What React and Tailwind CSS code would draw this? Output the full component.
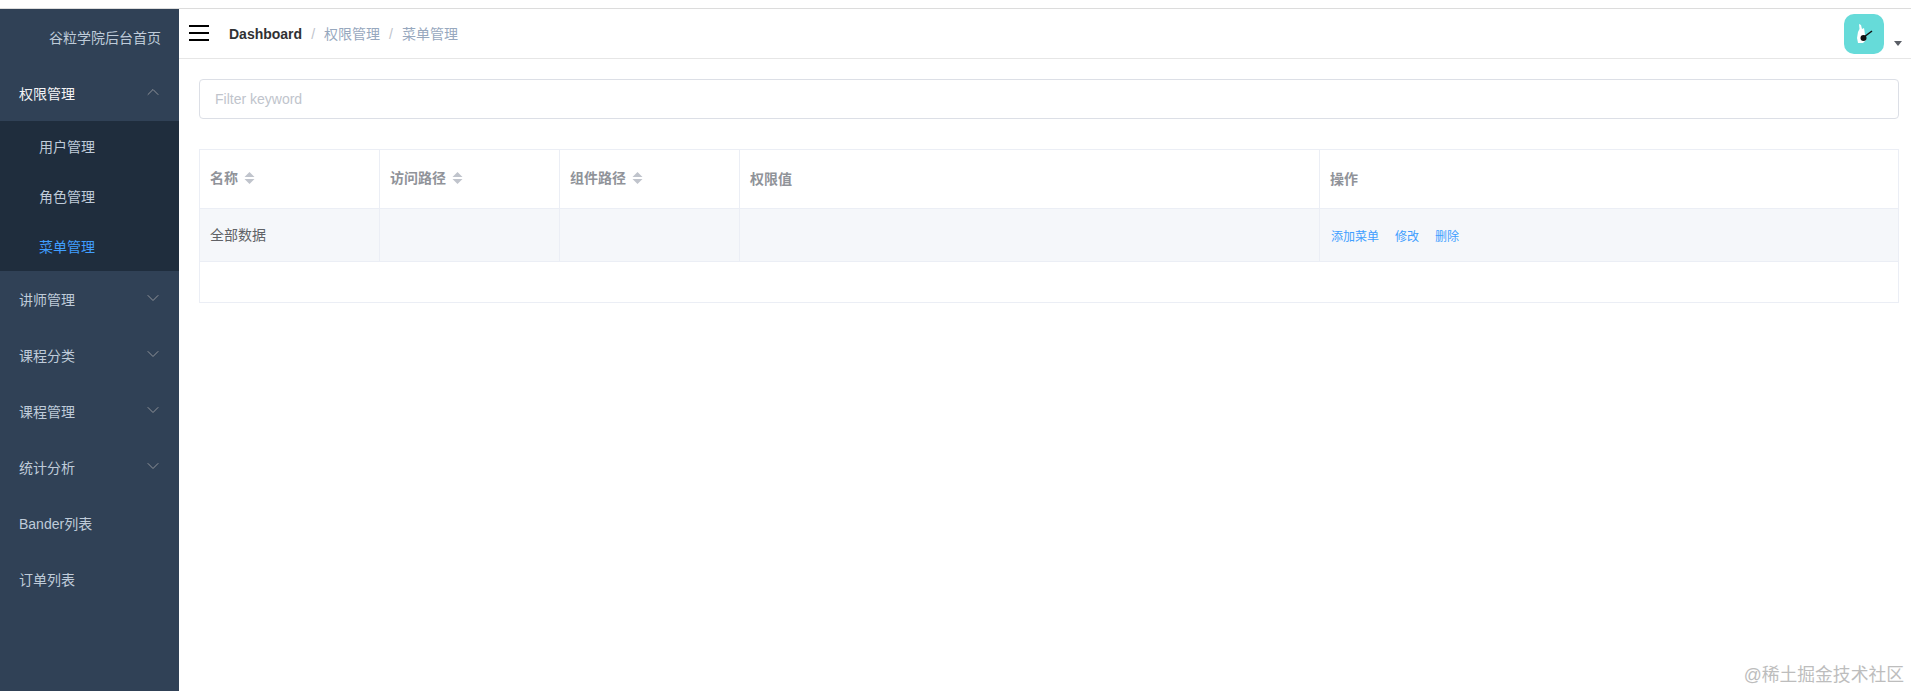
import { ChevronDown, ChevronUp } from 'lucide-react';

const font = { fontFamily: '"Liberation Sans", "Noto Sans CJK SC", sans-serif' };

const menuItems = [
  { label: '讲师管理', arrow: true },
  { label: '课程分类', arrow: true },
  { label: '课程管理', arrow: true },
  { label: '统计分析', arrow: true },
  { label: 'Bander列表' },
  { label: '订单列表' },
];

function SortCaret() {
  return (
    <svg width="11" height="12" viewBox="0 0 11 12" className="ml-[6px] inline-block align-[-1px]">
      <path d="M5.5 0 L10.5 5 L0.5 5 Z" fill="#c0c4cc" />
      <path d="M5.5 12 L10.5 7 L0.5 7 Z" fill="#c0c4cc" />
    </svg>
  );
}

function Sidebar() {
  return (
    <aside className="w-[179px] shrink-0 bg-[#304156] text-[14px] text-[#bfcbd9]">
      <div className="flex h-[56px] items-center justify-end pr-[18px] pt-[2px]">谷粒学院后台首页</div>
      <div className="flex h-[56px] items-center justify-between pl-[19px] pr-[16px] pt-[2px] text-[#f4f4f5]">
        <span>权限管理</span>
        <ChevronUp size={20} strokeWidth={1.2} className="mb-[5px] text-[#909399]" />
      </div>
      <div className="bg-[#1f2d3d]">
        <div className="flex h-[50px] items-center pl-[39px] pt-[3px]">用户管理</div>
        <div className="flex h-[50px] items-center pl-[39px] pt-[3px]">角色管理</div>
        <div className="flex h-[50px] items-center pl-[39px] pt-[3px] text-[#409eff]">菜单管理</div>
      </div>
      {menuItems.map((item) => (
        <div key={item.label} className="flex h-[56px] items-center justify-between pl-[19px] pr-[16px] pt-[3px]">
          <span>{item.label}</span>
          {item.arrow && <ChevronDown size={20} strokeWidth={1.2} className="mb-[5px] text-[#909399]" />}
        </div>
      ))}
    </aside>
  );
}

function Navbar() {
  return (
    <header className="flex h-[50px] items-center border-b border-[#e6e6e6] bg-white text-[14px]">
      <svg width="20" height="16" viewBox="0 0 20 16" className="ml-[10px] mb-[1px]">
        <rect x="0" y="0" width="20" height="2" fill="#000" />
        <rect x="0" y="7" width="20" height="2" fill="#000" />
        <rect x="0" y="14" width="20" height="2" fill="#000" />
      </svg>
      <nav className="ml-[20px] flex items-center pt-[1px] text-[#97a8be]">
        <span className="font-bold text-[#303133]">Dashboard</span>
        <span className="mx-[9px] text-[#c0c4cc]">/</span>
        <span>权限管理</span>
        <span className="mx-[9px] text-[#c0c4cc]">/</span>
        <span>菜单管理</span>
      </nav>
      <div className="ml-auto flex items-center pr-[9px]">
        <div className="flex h-[40px] w-[40px] items-center justify-center rounded-[10px] bg-[#66dbd9]">
          <svg width="24" height="24" viewBox="0 0 24 24">
            <path d="M7 2 L9 3 L10 7 L12 6 L12.5 9 L13 13 L14 18 L11 21 L6 21 L5 16 L6 10 L7.5 7 Z" fill="#fff" />
            <circle cx="11.5" cy="16" r="3" fill="#111" />
            <path d="M12 15 L20 9" stroke="#111" strokeWidth="1.5" />
          </svg>
        </div>
        <svg width="8" height="5" viewBox="0 0 8 5" className="ml-[10px] mt-[20px]">
          <path d="M0 0 L8 0 L4 5 Z" fill="#5a5e66" />
        </svg>
      </div>
    </header>
  );
}

function PermissionTable() {
  return (
    <table className="mt-[30px] w-full table-fixed border-collapse border border-[#ebeef5] text-[14px] text-[#606266]">
      <colgroup>
        <col className="w-[180px]" />
        <col className="w-[180px]" />
        <col className="w-[180px]" />
        <col className="w-[580px]" />
        <col />
      </colgroup>
      <thead>
        <tr className="h-[59px] font-bold text-[#909399]">
          <th className="border border-[#ebeef5] px-[10px] pb-[2px] text-left font-bold">名称<SortCaret /></th>
          <th className="border border-[#ebeef5] px-[10px] pb-[2px] text-left font-bold">访问路径<SortCaret /></th>
          <th className="border border-[#ebeef5] px-[10px] pb-[2px] text-left font-bold">组件路径<SortCaret /></th>
          <th className="border border-[#ebeef5] px-[10px] text-left font-bold">权限值</th>
          <th className="border border-[#ebeef5] px-[10px] text-left font-bold">操作</th>
        </tr>
      </thead>
      <tbody>
        <tr className="h-[53px] bg-[#f5f7fa]">
          <td className="border border-[#ebeef5] px-[10px]">全部数据</td>
          <td className="border border-[#ebeef5]" />
          <td className="border border-[#ebeef5]" />
          <td className="border border-[#ebeef5]" />
          <td className="border border-[#ebeef5] pl-[11px] pt-[3px] text-[12px] text-[#409eff]">
            <span className="flex gap-[16px]">
              <span>添加菜单</span>
              <span>修改</span>
              <span>删除</span>
            </span>
          </td>
        </tr>
        <tr className="h-[41px]">
          <td colSpan={5} />
        </tr>
      </tbody>
    </table>
  );
}

export default function App() {
  return (
    <div className="relative flex min-h-screen flex-col bg-white" style={font}>
      <div className="h-[9px] shrink-0 border-b border-[#dcdcdc] bg-white" />
      <div className="flex flex-1">
        <Sidebar />
        <main className="min-w-0 flex-1">
          <Navbar />
          <div className="pl-[20px] pr-[12px] pt-[20px]">
            <input
              placeholder="Filter keyword"
              className="h-[40px] w-full rounded-[4px] border border-[#dcdfe6] px-[15px] text-[14px] outline-none placeholder:text-[#c0c4cc]"
            />
            <PermissionTable />
          </div>
        </main>
      </div>
      <div className="absolute bottom-[4px] right-[7px] text-[17.8px] leading-[24px] text-[#bdbdbd]">@稀土掘金技术社区</div>
    </div>
  );
}
